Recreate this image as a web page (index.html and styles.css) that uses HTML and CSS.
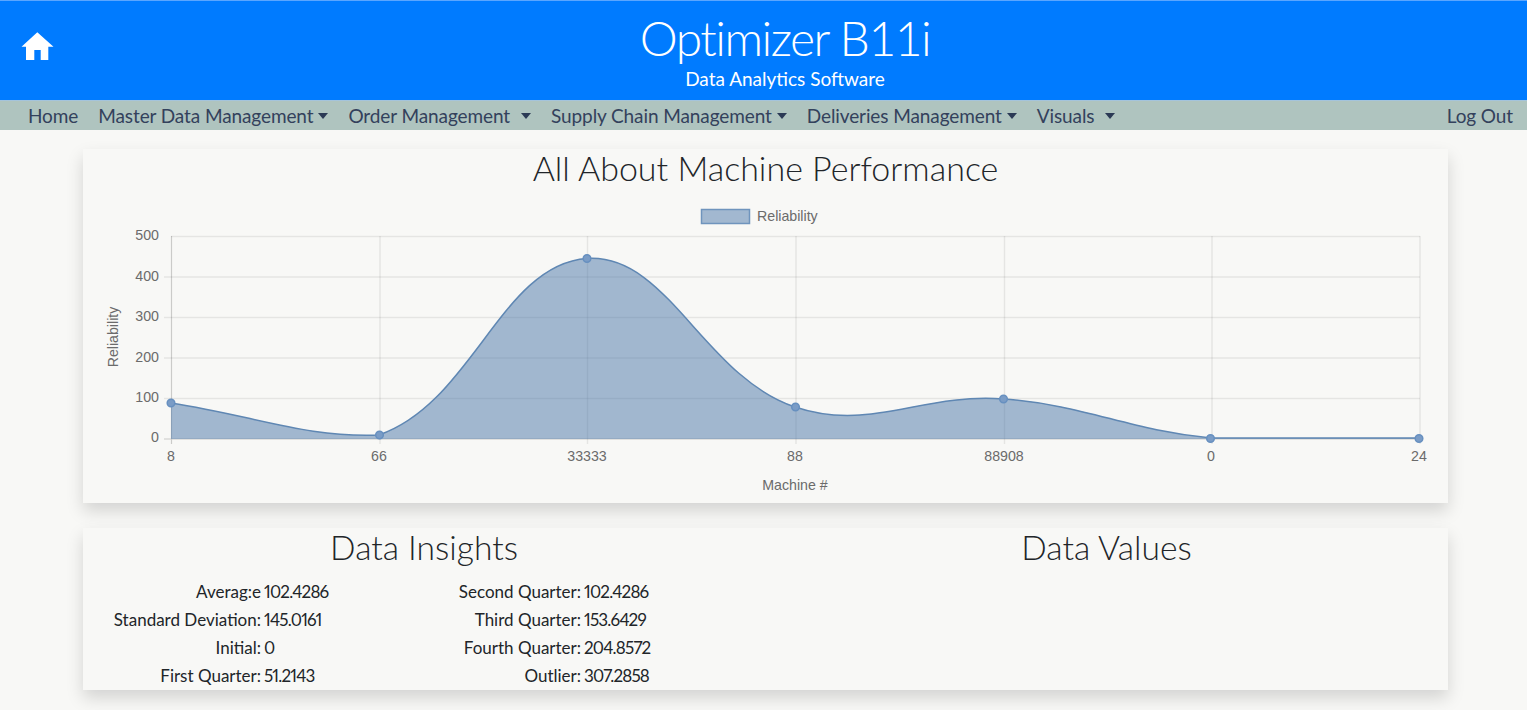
FILE: index.html
```html
<!DOCTYPE html>
<html lang="en">
<head>
<meta charset="utf-8">
<title>Optimizer B11i</title>
<link rel="stylesheet" href="styles.css">
</head>
<body>
<header class="banner">
  <a class="home-icon" href="#" aria-label="Home">
    <svg viewBox="0 0 33 29" width="33" height="29"><path fill="#fff" d="M16.300 .3 32.500 14.700H27.300V28H19.700V18H13.300V28H5V14.700H.5Z"/></svg>
  </a>
  <div class="brand">
    <h1 class="brand-title">Optimizer B11i</h1>
    <p class="brand-sub">Data Analytics Software</p>
  </div>
</header>
<nav class="navbar">
  <a class="nav-link" href="#">Home</a>
  <a class="nav-link caret" href="#">Master Data Management</a>
  <a class="nav-link caret wide" href="#">Order Management</a>
  <a class="nav-link caret" href="#">Supply Chain Management</a>
  <a class="nav-link caret" href="#">Deliveries Management</a>
  <a class="nav-link caret wide" href="#">Visuals</a>
  <a class="nav-link logout" href="#">Log Out</a>
</nav>
<main class="content">
  <section class="card chart-card">
    <h2 class="card-title">All About Machine Performance</h2>
    <svg class="chart" viewBox="83 192 1365 311" width="1365" height="311">
      <g class="grid">
        <path d="M171 236.500H1420M164 277H1420M164 317.500H1420M164 358H1420M164 398.500H1420"/>
        <path d="M380 236V444M587.500 236V444M796 236V444M1004.500 236V444M1212 236V444M1420 236V444"/>
      </g>
      <path class="axis" d="M171.500 236V444M164 439H1420"/>
      <path class="area" d="M171 403C254.200 415.800 306.500 438 379 435C472.900 402.400 501.100 264.300 587 258.500C667.500 253.100 703.200 376 795 407C869.800 432.200 920.800 392.800 1003.500 399C1087.200 405.200 1127.300 430.100 1211 438C1293.500 438 1335.800 438 1419 438V439H171Z"/>
      <path class="line" d="M171 403C254.200 415.800 306.500 438 379 435C472.900 402.400 501.100 264.300 587 258.500C667.500 253.100 703.200 376 795 407C869.800 432.200 920.800 392.800 1003.500 399C1087.200 405.200 1127.300 430.100 1211 438C1293.500 438 1335.800 438 1419 438"/>
      <g class="points">
        <circle cx="171" cy="403" r="3.800"/><circle cx="379.500" cy="435" r="3.800"/><circle cx="587" cy="258.500" r="3.800"/><circle cx="795.500" cy="407" r="3.800"/><circle cx="1003.500" cy="399" r="3.800"/><circle cx="1210.500" cy="438.500" r="3.800"/><circle cx="1419" cy="438.500" r="3.800"/>
      </g>
      <rect class="legend-box" x="701.500" y="209.500" width="48" height="14"/>
      <text class="chart-text" x="757" y="221">Reliability</text>
      <g class="chart-text end">
        <text x="159" y="240">500</text><text x="159" y="281">400</text><text x="159" y="321">300</text><text x="159" y="362">200</text><text x="159" y="402">100</text><text x="159" y="442">0</text>
      </g>
      <g class="chart-text mid">
        <text x="171" y="461">8</text><text x="379" y="461">66</text><text x="587" y="461">33333</text><text x="795" y="461">88</text><text x="1004" y="461">88908</text><text x="1211" y="461">0</text><text x="1419" y="461">24</text>
        <text x="795" y="490">Machine #</text>
        <text transform="translate(118 337) rotate(-90)">Reliability</text>
      </g>
    </svg>
  </section>
  <section class="card insights">
    <div class="insight-col">
      <h2 class="card-title">Data Insights</h2>
      <div class="stats">
        <dl class="stat-list">
          <div class="stat"><dt>Averag:e</dt><dd>102.4286</dd></div>
          <div class="stat"><dt>Standard Deviation:</dt><dd>145.0161</dd></div>
          <div class="stat"><dt>Initial:</dt><dd>0</dd></div>
          <div class="stat"><dt>First Quarter:</dt><dd>51.2143</dd></div>
        </dl>
        <dl class="stat-list">
          <div class="stat"><dt>Second Quarter:</dt><dd>102.4286</dd></div>
          <div class="stat"><dt>Third Quarter:</dt><dd>153.6429</dd></div>
          <div class="stat"><dt>Fourth Quarter:</dt><dd>204.8572</dd></div>
          <div class="stat"><dt>Outlier:</dt><dd>307.2858</dd></div>
        </dl>
      </div>
    </div>
    <div class="values-col">
      <h2 class="card-title">Data Values</h2>
    </div>
  </section>
</main>
</body>
</html>
```
FILE: styles.css
```css
* { box-sizing: border-box; }
html, body { margin: 0; height: 710px; overflow: hidden; }
body { background: #f8f8f6; font-family: Lato, "Open Sans", sans-serif; color: #212529; }
.banner {
  position: relative;
  height: 100px;
  background: #007bff;
  border-top: 1px solid #5ba6ff;
  color: #fff;
  text-align: center;
}
.home-icon { position: absolute; left: 21px; top: 31px; line-height: 0; }
.brand { padding-top: 7px; margin-left: 43px; }
.brand-title { margin: 0; font-size: 48px; font-weight: 300; line-height: 60px; letter-spacing: -1.500px; }
.brand-sub { margin: 0; font-size: 19px; line-height: 22px; }
.navbar {
  display: flex;
  height: 30px;
  align-items: center;
  padding: 0 14px 0 28px;
  background: #afc4bf;
  border-top: 1px solid #a4c4dc;
  gap: 20px;
  font-size: 19px;
  letter-spacing: -.1px;
}
.nav-link { color: #33415c; text-decoration: none; white-space: nowrap; }
.caret::after {
  content: "";
  display: inline-block;
  margin-left: 5px;
  vertical-align: 4px;
  border-top: 6px solid #2b3a55;
  border-left: 5.500px solid transparent;
  border-right: 5.500px solid transparent;
}
.wide::after { margin-left: 11px; }
.logout { margin-left: auto; }
.content { padding: 19px 79px 0 83px; }
.card { background: #f8f8f6; box-shadow: 0 8px 16px rgba(0, 0, 0, .15); }
.chart-card { height: 354px; }
.card-title { margin: 0; font-size: 34px; font-weight: 300; line-height: 38px; text-align: center; color: #212529; }
.insights .card-title { font-size: 33.600px; }
.chart { display: block; margin-top: 5px; }
.grid path { fill: none; stroke: #000; stroke-opacity: .075; stroke-width: 1.500; }
.axis { fill: none; stroke: #000; stroke-opacity: .18; stroke-width: 1.200; }
.area { fill: #4a76a8; fill-opacity: .5; }
.line { fill: none; stroke: #5f87b3; stroke-width: 1.500; }
.points circle { fill: #7a9cc6; stroke: #6790c0; stroke-width: 1.500; }
.legend-box { fill: #a2b8d0; stroke: #6f94bd; stroke-width: 1.500; }
.chart-text { font: 14.200px "Liberation Sans", Arial, sans-serif; fill: #6b6b6b; }
.end { text-anchor: end; }
.mid { text-anchor: middle; }
.insights { display: flex; height: 162px; margin-top: 25px; }
.insight-col { width: 682px; }
.values-col { flex: 1; }
.stats { display: flex; margin-top: 11px; }
.stat-list { margin: 0; width: 320px; font-size: 17px; }
.stat { display: flex; height: 28px; align-items: center; }
.stat dt { width: 178px; text-align: right; }
.stat dd { margin: 0 0 0 3px; font-variant-numeric: proportional-nums; letter-spacing: -.8px; }
```
